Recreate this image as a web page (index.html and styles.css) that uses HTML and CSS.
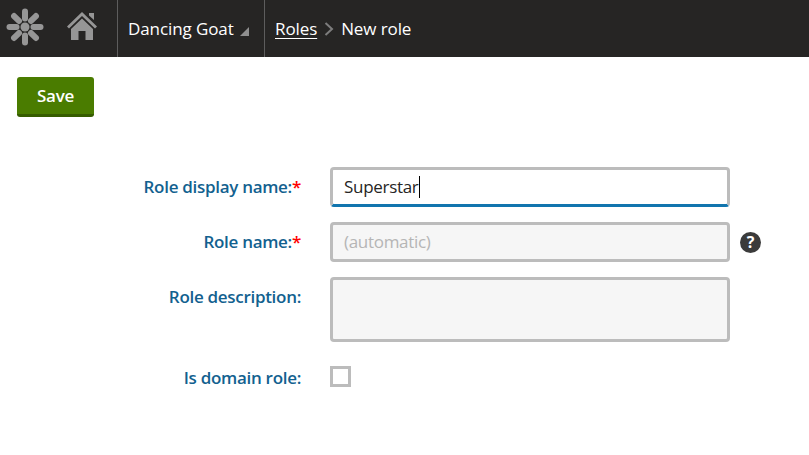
FILE: index.html
```html
<!DOCTYPE html>
<html lang="en">
<head>
<meta charset="utf-8">
<title>New role</title>
<link rel="stylesheet" href="styles.css">
</head>
<body>
<header class="topbar">
  <a class="logo" href="#" aria-label="Kentico">
    <svg width="38" height="38" viewBox="0 0 38 38">
      <g class="petals">
        <line x1="19" y1="3.5" x2="19" y2="10.5"/>
        <line x1="19" y1="3.5" x2="19" y2="10.5" transform="rotate(45 19 19)"/>
        <line x1="19" y1="3.5" x2="19" y2="10.5" transform="rotate(90 19 19)"/>
        <line x1="19" y1="3.5" x2="19" y2="10.5" transform="rotate(135 19 19)"/>
        <line x1="19" y1="3.5" x2="19" y2="10.5" transform="rotate(180 19 19)"/>
        <line x1="19" y1="3.5" x2="19" y2="10.5" transform="rotate(225 19 19)"/>
        <line x1="19" y1="3.5" x2="19" y2="10.5" transform="rotate(270 19 19)"/>
        <line x1="19" y1="3.5" x2="19" y2="10.5" transform="rotate(315 19 19)"/>
      </g>
      <circle cx="19" cy="19" r="4.5" fill="#969696"/>
    </svg>
  </a>
  <a class="home" href="#" aria-label="Home">
    <svg width="32" height="30" viewBox="0 0 32 30">
      <path fill="#969696" d="M16 1 L31 15.5 L29 17.5 L16 5 L3 17.5 L1 15.5 Z M23 2 H28 V9 L23 4.5 Z M16 7.5 L27 18 V29 H19.5 V20 H12.5 V29 H5 V18 Z"/>
    </svg>
  </a>
  <div class="site"><span>Dancing Goat</span><i class="tri"></i></div>
  <nav class="crumbs">
    <a href="#">Roles</a>
    <svg class="chev" width="10" height="14" viewBox="0 0 10 14"><path d="M1.5 1 L8 7 L1.5 13" fill="none" stroke="#7d7d7d" stroke-width="2"/></svg>
    <span>New role</span>
  </nav>
</header>
<main class="content">
  <button class="save" type="button">Save</button>
  <form class="form">
    <label class="lbl">Role display name:<b>*</b></label>
    <div class="field focused" role="textbox">Superstar<i class="caret"></i></div>

    <label class="lbl">Role name:<b>*</b></label>
    <div class="field muted">(automatic)</div>
    <span class="help">?</span>

    <label class="lbl">Role description:</label>
    <div class="field area"></div>

    <label class="lbl chk-lbl">Is domain role:</label>
    <div class="check"></div>
  </form>
</main>
</body>
</html>
```
FILE: styles.css
```css
* { box-sizing: border-box; }
html, body { margin: 0; padding: 0; }
body {
  background: #fff;
  font-family: "Open Sans", "Noto Sans", sans-serif;
  color: #262524;
}
.topbar {
  height: 57px;
  background: #262524;
  display: flex;
  align-items: center;
  color: #fff;
  font-size: 17px;
}
.logo { display: flex; margin-left: 6px; margin-top: -4px; }
.petals { stroke: #969696; stroke-width: 6; stroke-linecap: round; }
.home { display: flex; margin-left: 22px; margin-top: -6px; }
.site {
  height: 57px;
  margin-left: 19px;
  padding: 0 0 0 10px;
  width: 148px;
  border-left: 1px solid #5d5d5d;
  border-right: 1px solid #5d5d5d;
  display: flex;
  align-items: center;
  letter-spacing: -0.1px;
}
.tri {
  width: 0;
  height: 0;
  margin: 6px 0 0 6px;
  border-style: solid;
  border-width: 0 0 9px 9px;
  border-color: transparent transparent #8f8f8f transparent;
}
.crumbs {
  display: flex;
  align-items: center;
  margin-left: 10px;
  letter-spacing: -0.1px;
}
.crumbs a { color: #fff; text-decoration: underline; text-underline-offset: 3px; }
.chev { margin: 0 7px; }
.content { padding: 20px 0 0 17px; }
.save {
  display: block;
  width: 77px;
  height: 40px;
  border: 0;
  border-bottom: 3px solid #365c00;
  border-radius: 3px;
  background: #4a7c00;
  color: #fff;
  font: 600 17px "Open Sans", sans-serif;
  letter-spacing: -0.3px;
  padding: 0;
}
.form {
  display: grid;
  grid-template-columns: 284px 400px 32px;
  column-gap: 29px;
  margin-top: 50px;
  align-items: start;
}
.lbl {
  grid-column: 1;
  text-align: right;
  font-size: 17px;
  font-weight: 600;
  color: #12618f;
  letter-spacing: -0.3px;
  padding-top: 9px;
  line-height: 22px;
}
.lbl b { color: #f00; font-weight: 600; }
.field {
  grid-column: 2;
  height: 40px;
  margin-bottom: 15px;
  border: 3px solid #bcbcbc;
  border-radius: 4px;
  padding: 0 10px 0 11px;
  font-size: 17px;
  line-height: 34px;
  letter-spacing: -0.3px;
  background: #fff;
}
.focused { border-bottom-color: #1175ae; }
.muted { background: #f6f6f6; color: #b5b5b5; }
.area { height: 65px; background: #f6f6f6; margin-bottom: 24px; }
.caret {
  display: inline-block;
  width: 1px;
  height: 22px;
  background: #000;
  vertical-align: -5px;
}
.help {
  grid-column: 3;
  margin: 10px 0 0 -19px;
  width: 21px;
  height: 21px;
  border-radius: 50%;
  background: #3b3b3b;
  color: #fff;
  font-size: 16px;
  font-weight: 700;
  line-height: 21px;
  text-align: center;
}
.chk-lbl { padding-top: 1px; }
.check {
  grid-column: 2;
  width: 21px;
  height: 21px;
  border: 3px solid #bcbcbc;
}
```
